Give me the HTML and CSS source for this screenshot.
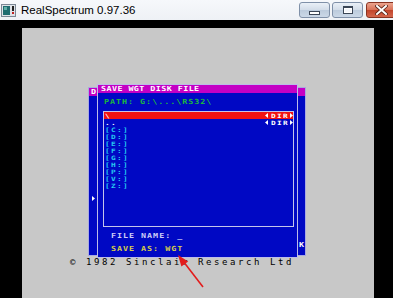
FILE: index.html
```html
<!DOCTYPE html>
<html>
<head>
<meta charset="utf-8">
<title>RealSpectrum 0.97.36</title>
<link rel="stylesheet" href="styles.css">
</head>
<body>
<div class="window">
  <div class="titlebar">
    <svg class="app-icon" width="16" height="16" viewBox="0 0 16 16">
      <rect x="0.5" y="2.5" width="14" height="12" fill="#dfe3e8" stroke="#7b8794"/>
      <rect x="2" y="4" width="7" height="9" fill="#1f6d70"/>
      <rect x="3" y="5" width="3" height="3" fill="#5fb0a8"/>
      <rect x="11" y="4" width="2" height="5" fill="#202020"/>
      <rect x="11" y="10" width="2" height="2" fill="#c02020"/>
    </svg>
    <span class="title">RealSpectrum 0.97.36</span>
    <div class="controls">
      <div class="btn btn-min"><span class="min-glyph"></span></div>
      <div class="btn btn-max"><span class="max-glyph"></span></div>
      <div class="btn btn-close">
        <svg width="13" height="10" viewBox="0 0 13 10">
          <path d="M2 1 L11 9 M11 1 L2 9" stroke="#5a2418" stroke-width="3.6" stroke-linecap="square"/>
          <path d="M2 1 L11 9 M11 1 L2 9" stroke="#ffffff" stroke-width="2" stroke-linecap="square"/>
        </svg>
      </div>
    </div>
  </div>
  <div class="client">
    <div class="screen">
      <div class="back-panel">
        <div class="back-title"><span class="zx">D</span></div>
        <div class="back-body">
          <div class="back-left">
            <svg width="3" height="5" viewBox="0 0 3 5"><path d="M0 0 L3 2.5 L0 5 Z" fill="#ffffff"/></svg>
          </div>
          <div class="back-mid"></div>
          <div class="back-right"><span class="zx">K</span></div>
        </div>
      </div>

      <div class="dialog">
        <div class="dlg-title"><span class="zx">SAVE WGT DISK FILE</span></div>
        <div class="dlg-body">
          <div class="path"><span class="zx">PATH: G:\...\RS32\</span></div>
          <div class="filelist">
            <div class="row row-selected"><span class="name">\</span><span class="dir"><svg width="3" height="5" viewBox="0 0 3 5"><path d="M3 0 L0 2.5 L3 5 Z" fill="#fff"/></svg><span class="dir-text">DIR</span><svg width="3" height="5" viewBox="0 0 3 5"><path d="M0 0 L3 2.5 L0 5 Z" fill="#fff"/></svg></span></div>
            <div class="row row-white"><span class="name">..</span><span class="dir"><svg width="3" height="5" viewBox="0 0 3 5"><path d="M3 0 L0 2.5 L3 5 Z" fill="#fff"/></svg><span class="dir-text">DIR</span><svg width="3" height="5" viewBox="0 0 3 5"><path d="M0 0 L3 2.5 L0 5 Z" fill="#fff"/></svg></span></div>
            <div class="row row-drive"><span class="name">[C:]</span></div>
            <div class="row row-drive"><span class="name">[D:]</span></div>
            <div class="row row-drive"><span class="name">[E:]</span></div>
            <div class="row row-drive"><span class="name">[F:]</span></div>
            <div class="row row-drive"><span class="name">[G:]</span></div>
            <div class="row row-drive"><span class="name">[H:]</span></div>
            <div class="row row-drive"><span class="name">[P:]</span></div>
            <div class="row row-drive"><span class="name">[V:]</span></div>
            <div class="row row-drive"><span class="name">[Z:]</span></div>
          </div>
          <div class="field field-name"><span class="zx">FILE NAME: _</span></div>
          <div class="field field-type"><span class="zx">SAVE AS: WGT</span></div>
        </div>
      </div>

      <div class="copyright">© 1982 Sinclair Research Ltd</div>
    </div>
  </div>
  <svg class="annotation" width="393" height="298" viewBox="0 0 393 298">
    <line x1="203" y1="287" x2="183" y2="261" stroke="#e21c1c" stroke-width="1.6"/>
    <path d="M178 255 L188.2 261.4 L181.4 266.6 Z" fill="#e21c1c"/>
  </svg>
</div>
</body>
</html>
```

FILE: styles.css
```css
html, body {
  margin: 0;
  padding: 0;
}

body {
  width: 393px;
  height: 298px;
  overflow: hidden;
  background: #000;
}

.window {
  position: relative;
  width: 393px;
  height: 298px;
  overflow: hidden;
}

/* ---------- title bar ---------- */
.titlebar {
  height: 20px;
  display: flex;
  align-items: center;
  background: linear-gradient(#f6f8fb, #eef1f5);
}

.app-icon {
  margin-left: 1px;
  margin-right: 4px;
  flex: none;
}

.title {
  font-family: "Liberation Sans", Arial, sans-serif;
  font-size: 11.5px;
  color: #000;
  white-space: nowrap;
}

.controls {
  margin-left: auto;
  margin-right: -3px;
  align-self: flex-start;
  margin-top: 2px;
  display: flex;
  gap: 2px;
}

.btn {
  box-sizing: border-box;
  width: 31px;
  height: 16px;
  border: 1px solid #7f90a8;
  border-radius: 3px;
  background: linear-gradient(#eaf0f7 0%, #d3dde9 48%, #bccbdc 52%, #cbd8e7 100%);
  display: flex;
  align-items: center;
  justify-content: center;
}

.btn-min {
  align-items: flex-end;
  padding-bottom: 2px;
}

.min-glyph {
  box-sizing: border-box;
  width: 11px;
  height: 4px;
  border: 1px solid #3b4656;
  background: #fff;
}

.max-glyph {
  box-sizing: border-box;
  width: 10px;
  height: 8px;
  border: 1px solid #3b4656;
  border-top-width: 2px;
  background: #f4f6fa;
  box-shadow: inset 0 0 0 1px #fff;
}

.btn-close {
  width: 30px;
  margin-left: 1px;
  border-color: #8a3422;
  background: linear-gradient(#eba48e 0%, #d97258 48%, #c2452b 52%, #d4664c 100%);
}

/* ---------- emulator client ---------- */
.client {
  height: 278px;
  box-sizing: border-box;
  padding: 8px 0 0 22px;
  background: #000;
}

.screen {
  position: relative;
  width: 352px;
  height: 270px;
  background: #c8c8c8;
  overflow: hidden;
  display: flex;
  flex-direction: column;
  align-items: flex-start;
}

.back-panel,
.dialog {
  font-family: "DejaVu Sans Mono", "Liberation Mono", monospace;
  font-weight: bold;
  font-size: 7px;
  letter-spacing: 0.8px;
}

/* widened blocky "ZX" lettering */
.zx {
  display: inline-block;
  transform: scaleX(1.2);
  transform-origin: left center;
  white-space: nowrap;
}

/* background (partially hidden) window */
.back-panel {
  margin: 59px 0 0 66px;
  width: 218px;
  height: 169px;
  box-sizing: border-box;
  border: 1px solid #a9a9e2;
  background: #0008c4;
  display: flex;
  flex-direction: column;
}

.back-title {
  height: 8px;
  line-height: 8px;
  background: #c400c4;
  color: #fff;
  padding-left: 2px;
}

.back-body {
  flex: 1;
  display: grid;
  grid-template-columns: 8px 1fr 8px;
}

.back-left {
  padding: 100px 0 0 3px;
  line-height: 0;
}

.back-right {
  align-self: end;
  padding: 0 0 6px 2px;
  height: 7px;
  line-height: 7px;
  color: #fff;
}

/* foreground dialog */
.dialog {
  position: absolute;
  left: 75px;
  top: 56px;
  width: 201px;
  height: 174px;
  box-sizing: border-box;
  border: 1px solid #bcbce8;
  background: #0008c4;
  display: flex;
  flex-direction: column;
}

.dlg-title {
  height: 8px;
  line-height: 8px;
  background: #c400c4;
  color: #fff;
  padding-left: 3px;
  letter-spacing: 0.35px;
}

.dlg-body {
  display: flex;
  flex-direction: column;
  padding: 6px 3px 0 5px;
}

.path {
  height: 7px;
  line-height: 7px;
  color: #1cb83c;
  padding-left: 1px;
}

.filelist {
  margin-top: 5px;
  width: 191px;
  height: 116px;
  box-sizing: border-box;
  border: 1px solid #c4c4ea;
  display: flex;
  flex-direction: column;
}

.row {
  height: 7px;
  line-height: 7px;
  font-size: 6px;
  letter-spacing: 1px;
  display: flex;
  justify-content: space-between;
  align-items: center;
  padding-left: 1px;
  white-space: nowrap;
}

.row .name {
  transform: scaleX(1.3);
  transform-origin: left center;
}

.row-selected {
  background: #f01212;
  color: #fff;
}

.row-white {
  color: #fff;
}

.row-drive {
  color: #26c8f0;
}

.dir {
  display: flex;
  align-items: center;
  gap: 2px;
  color: #fff;
}

.dir-text {
  transform: scaleX(1.3);
  transform-origin: center;
  margin: 0 1px 0 3px;
}

.field {
  height: 7px;
  line-height: 7px;
  padding-left: 8px;
}

.field-name {
  margin-top: 6px;
  color: #cdcdf6;
}

.field-type {
  margin-top: 6px;
  color: #d6cd48;
}

/* ZX copyright line */
.copyright {
  margin: 2px 0 0 48px;
  font-family: "DejaVu Sans Mono", "Liberation Mono", monospace;
  font-size: 9px;
  line-height: 9px;
  letter-spacing: 2.58px;
  color: #000;
  white-space: nowrap;
}

/* annotation arrow over the screenshot */
.annotation {
  position: absolute;
  left: 0;
  top: 0;
  pointer-events: none;
}
```
